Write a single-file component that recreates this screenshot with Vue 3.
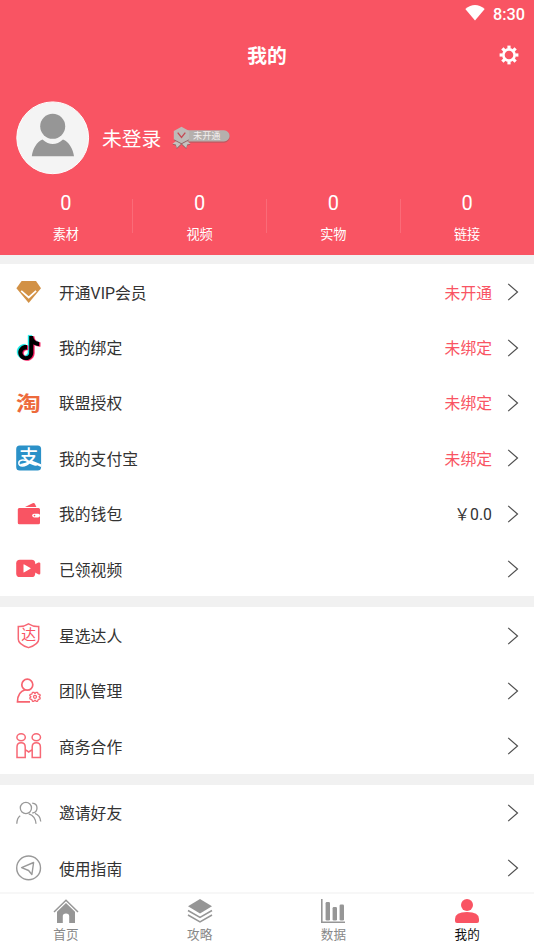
<script setup>
const stats = ['素材', '视频', '实物', '链接']
const groups = [
  [
    { icon: 'vip', label: '开通VIP会员', value: '未开通', red: true },
    { icon: 'tiktok', label: '我的绑定', value: '未绑定', red: true },
    { icon: 'taobao', label: '联盟授权', value: '未绑定', red: true },
    { icon: 'alipay', label: '我的支付宝', value: '未绑定', red: true },
    { icon: 'wallet', label: '我的钱包', value: '￥0.0' },
    { icon: 'video', label: '已领视频' },
  ],
  [
    { icon: 'shield', label: '星选达人' },
    { icon: 'team', label: '团队管理' },
    { icon: 'coop', label: '商务合作' },
  ],
  [
    { icon: 'friends', label: '邀请好友' },
    { icon: 'guide', label: '使用指南' },
  ],
]
const tabs = [
  { icon: 'home', label: '首页' },
  { icon: 'layers', label: '攻略' },
  { icon: 'chart', label: '数据' },
  { icon: 'me', label: '我的', active: true },
]
const note =
  'M12.525.02c1.31-.02 2.61-.01 3.91-.02.08 1.53.63 3.09 1.75 4.17 1.12 1.11 2.7 1.62 4.24 1.79v4.03c-1.44-.05-2.89-.35-4.2-.97-.57-.26-1.1-.59-1.62-.93-.01 2.92.01 5.84-.02 8.75-.08 1.4-.54 2.79-1.35 3.94-1.31 1.92-3.58 3.17-5.91 3.21-1.43.08-2.86-.31-4.08-1.03-2.02-1.19-3.44-3.37-3.65-5.71-.02-.5-.03-1-.01-1.49.18-1.9 1.12-3.72 2.58-4.96 1.66-1.44 3.98-2.13 6.15-1.72.02 1.48-.04 2.96-.04 4.44-.99-.32-2.15-.23-3.02.37-.63.41-1.11 1.04-1.36 1.75-.21.51-.15 1.07-.14 1.61.24 1.64 1.82 3.02 3.5 2.87 1.12-.01 2.19-.66 2.77-1.61.19-.33.4-.67.41-1.06.1-1.79.06-3.57.07-5.36.01-4.03-.01-8.05.02-12.07z'
</script>

<template>
  <div class="page">
    <header class="hero">
      <div class="status">
        <svg class="wifi" viewBox="0 0 20 16"><path d="M.3 3.9Q10-3.7 19.7 3.9L10 15.5z" fill="#fff" /></svg>
        <span class="clock">8:30</span>
      </div>
      <div class="titlebar">
        <h1>我的</h1>
        <svg class="gear" viewBox="0 0 20 20" fill="none" stroke="#fff">
          <circle cx="10" cy="10" r="5.6" stroke-width="2.6" />
          <g stroke-width="3.2">
            <path v-for="n in 8" :key="n" d="M10 .6v3.2" :transform="`rotate(${n * 45} 10 10)`" />
          </g>
        </svg>
      </div>
      <div class="profile">
        <svg class="avatar" viewBox="0 0 74 74">
          <circle cx="36.700" cy="36.800" r="35.900" fill="#f4f4f4" stroke="#fff" />
          <circle cx="36.700" cy="25.300" r="12.500" fill="#969696" />
          <path d="M15.800 55.300C16.800 47.500 20.800 41 26.500 38.500Q36.800 47.500 47 38.500C52.800 41 57 47.500 58 55.300z" fill="#969696" />
        </svg>
        <span class="name">未登录</span>
        <svg class="badge" viewBox="0 0 60 24">
          <path d="M14 5.300h38a5.700 5.700 0 0 1 0 11.400H14z" fill="#a7595d" opacity=".7" />
          <path d="M14 4.300h38a5.600 5.600 0 0 1 0 11.200H14z" fill="#b5b0ad" />
          <path d="M5.500 14L.5 17.700l3.300.8 1 3.500 4.700-4.500zM13.500 14l5 3.700-3.300.8-1 3.500-4.700-4.500z" fill="#8f5f62" transform="translate(0 .9)" />
          <path d="M5.500 14L.5 17.700l3.300.8 1 3.500 4.700-4.500zM13.500 14l5 3.700-3.300.8-1 3.500-4.700-4.500z" fill="#c5c1bf" />
          <path d="M9.500 1.500l7.400 4v8L9.500 17.500 2.100 13.500v-8z" fill="#8f5f62" transform="translate(0 .8)" />
          <path d="M9.500.8l7.700 4.100v8.300L9.500 17.300 1.800 13.200V4.900z" fill="#bdbab8" />
          <path d="M5.700 6.600l3.800 4.900 3.800-4.900" fill="none" stroke="#c44954" stroke-width="1.300" />
          <text x="21" y="13.300" font-size="9.200" fill="#f2eeee">未开通</text>
        </svg>
      </div>
      <div class="stats">
        <div v-for="s in stats" :key="s" class="stat">
          <span class="num">0</span>
          <span class="cap">{{ s }}</span>
        </div>
      </div>
    </header>

    <main class="groups">
      <section v-for="(rows, gi) in groups" :key="gi" class="group">
        <div v-for="row in rows" :key="row.label" class="row">
          <svg class="icon" viewBox="0 0 26 26">
            <template v-if="row.icon === 'vip'">
              <path d="M5.600 2h14.400l5 7.300-12.300 14.700L.4 9.300z" fill="#d29145" />
              <path d="M5.200 11.800l7.500 6.700 7.400-6.700" fill="none" stroke="#fff" stroke-width="1.700" />
            </template>
            <template v-else-if="row.icon === 'tiktok'">
              <g transform="translate(-.2 .6)">
                <path :d="note" fill="#15e8e4" stroke="#15e8e4" stroke-width=".4" transform="translate(-.3 -.3)" />
                <path :d="note" fill="#f5145a" stroke="#f5145a" stroke-width=".4" transform="translate(2 1)" />
                <path :d="note" fill="#000" transform="translate(.9 .500)" />
              </g>
            </template>
            <template v-else-if="row.icon === 'taobao'">
              <text class="tao" transform="translate(.1 20.500) scale(1.130 .92)" font-size="22">淘</text>
            </template>
            <template v-else-if="row.icon === 'alipay'">
              <rect x=".2" y=".6" width="24.900" height="25" rx="3.500" fill="#2b91c8" />
              <text class="ali" x="3.300" y="19.300" font-size="19">支</text>
              <path d="M15 15.300l10.100 4v2.800l-11.100-5z" fill="#fff" />
              <path d="M13.500 17.500C9 22.500 2.800 21.700 2.800 18s5.700-4.200 10.700-1" fill="none" stroke="#fff" stroke-width="1.500" />
            </template>
            <g v-else-if="row.icon === 'wallet'" fill="#f95463">
              <path d="M9 6l7.600-3.800q1.700-.7 2.400.7l1.400 3.100z" />
              <path d="M3.200 6.900h19.300q1.500 0 1.500 1.500v13.400q0 1.500-1.500 1.500H3.200q-1.400 0-1.400-1.500V8.400q0-1.500 1.400-1.500z" />
              <rect x="16.200" y="12.800" width="7.800" height="3.600" rx="1.800" fill="#fff" />
              <circle cx="18.500" cy="14.600" r=".8" />
            </g>
            <g v-else-if="row.icon === 'video'" fill="#f95463">
              <rect x=".2" y="3.700" width="19" height="17.300" rx="3.600" />
              <path d="M19 8.300l3.300-1.700q2-.5 2 1v9.600q0 1.700-2 1L19 16.500z" />
              <path d="M7.500 8.900v7q0 .8.800.4l6.100-3.500q.7-.4 0-.8L8.300 8.500q-.8-.4-.8.400z" fill="#fff" />
            </g>
            <g v-else-if="row.icon === 'shield'">
              <path d="M12.500.9Q17.500 3.900 22.700 3.500v12.700q0 5.200-10.200 8.400Q2.300 21.400 2.300 16.200V3.500Q7.700 3.900 12.500.9z" fill="none" stroke="#f76875" stroke-width="1.500" />
              <text x="5.200" y="17.300" font-size="14.800" fill="#f95463">达</text>
            </g>
            <g v-else-if="row.icon === 'team'" fill="none" stroke="#f76470" stroke-width="1.700">
              <circle cx="11.300" cy="6.700" r="5.500" />
              <path d="M9.200 11.800Q1.500 14 1.500 23.800H14" />
              <path d="M16.500 14.300h1.300l1.200 1.200 1.200-1.200h1.300l.8 1.900 1.600.2.300 1.200-1.100 1.200 1.100 1.200-.3 1.200-1.600.2-.8 1.900h-1.300L19 22.100l-1.200 1.200h-1.300l-.8-1.900-1.600-.2-.3-1.200 1.100-1.200-1.100-1.200.3-1.200 1.600-.2z" stroke-width="1.300" stroke-linejoin="round" />
              <circle cx="19" cy="18.800" r="1.500" stroke-width="1.300" />
            </g>
            <g v-else-if="row.icon === 'coop'" fill="none" stroke="#f76875" stroke-width="1.500">
              <ellipse cx="5.100" cy="4.300" rx="4.200" ry="3.500" />
              <ellipse cx="20.300" cy="4.300" rx="4.200" ry="3.500" />
              <path d="M9.200 17v7.600H1V14q0-4.200 4.100-4.200t4.100 4.200v2.700l3.500 2.300 3.500-2.300V14q0-4.200 4.100-4.200t4.100 4.200v10.600h-8.200V17" />
            </g>
            <g v-else-if="row.icon === 'friends'" fill="none" stroke="#999" stroke-width="1.300">
              <circle cx="9.900" cy="8" r="5.600" />
              <path d="M16.200 3.200Q21 3.600 21 8t-4.700 5M.8 23.700Q1 18 4.200 15.800M12.800 13.800Q19.500 16 20 23.700M19 13.400Q24.300 15.500 24.700 21.500" />
            </g>
            <g v-else fill="none" stroke="#999">
              <circle cx="12.600" cy="12.900" r="11.900" stroke-width="1.400" />
              <path d="M5.600 12.600L17.600 7.500l-1.700 12-3.300-4z" stroke-width="1.400" stroke-linejoin="round" />
            </g>
          </svg>
          <span class="label">{{ row.label }}</span>
          <span v-if="row.value" class="value" :class="{ red: row.red }">{{ row.value }}</span>
          <svg class="chevron" viewBox="0 0 11 18"><path d="M1.200.9L10.500 9l-9.300 8.100" fill="none" stroke="#505050" stroke-width="1.200" /></svg>
        </div>
      </section>
    </main>

    <nav class="tabbar">
      <div v-for="t in tabs" :key="t.label" class="tab" :class="{ active: t.active }">
        <svg class="tabicon" viewBox="0 0 26 26">
          <g v-if="t.icon === 'home'" fill="#969696">
            <path d="M1 14L13 2.200 25 14" fill="none" stroke="#969696" stroke-width="1.500" />
            <path d="M4 13.800L13 5l9 8.800V25h-5.800v-7q0-2.600-3.200-2.600T9.800 18v7H4z" />
          </g>
          <g v-else-if="t.icon === 'layers'">
            <path d="M13 1l12 7.300-12 7.200L1 8.300z" fill="#969696" />
            <path d="M1 12.500l12 7 12-7M1 17l12 7 12-7" fill="none" stroke="#969696" stroke-width="1.500" />
          </g>
          <g v-else-if="t.icon === 'chart'" fill="#969696">
            <path d="M1 1h1.600v22.600H25V25H1z" />
            <rect x="5.600" y="4" width="4.400" height="18.500" rx="1.300" />
            <rect x="12.600" y="9" width="4.400" height="13.500" rx="1.300" />
            <rect x="19.600" y="6.500" width="4.400" height="16" rx="1.300" />
          </g>
          <g v-else fill="#f95463">
            <circle cx="13" cy="7" r="6" />
            <path d="M1 21q0-7 12-7t12 7v2q0 2-2 2H3q-2 0-2-2z" />
          </g>
        </svg>
        <span>{{ t.label }}</span>
      </div>
    </nav>
  </div>
</template>

<style>
body {
  margin: 0;
  overflow: hidden;
}
</style>

<style scoped>
.page {
  display: flex;
  flex-direction: column;
  width: 534px;
  height: 949px;
  overflow: hidden;
  background: #fff;
  color: #333;
  font-family: Roboto, "Noto Sans CJK SC", sans-serif;
}
svg {
  display: block;
  flex: none;
  overflow: visible;
}
.hero {
  flex: none;
  display: flex;
  flex-direction: column;
  height: 255px;
  background: #f95463;
  color: #fff;
}
.status {
  display: flex;
  align-items: center;
  justify-content: flex-end;
  gap: 8px;
  height: 28px;
  padding-right: 9px;
}
.wifi {
  width: 20px;
  height: 16px;
  margin-bottom: 2px;
}
.clock {
  padding-top: 1px;
  font-size: 16.3px;
  font-weight: 500;
  line-height: 28px;
}
.titlebar {
  display: grid;
  grid-template-columns: 1fr auto 1fr;
  align-items: center;
  height: 54px;
  padding: 0 15px;
}
h1 {
  grid-column: 2;
  margin: 0;
  padding-top: 3px;
  font-size: 19.8px;
  font-weight: 700;
  line-height: 28px;
}
.gear {
  justify-self: end;
  width: 20px;
  height: 20px;
}
.profile {
  display: flex;
  align-items: center;
  height: 74px;
  margin-top: 19px;
  padding-left: 16px;
}
.avatar {
  width: 74px;
  height: 74px;
}
.name {
  margin-left: 12px;
  padding-top: 3px;
  font-size: 19.8px;
  line-height: 28px;
}
.badge {
  width: 60px;
  height: 24px;
  margin-left: 10.5px;
}
.stats {
  display: grid;
  grid-template-columns: repeat(4, 1fr);
  width: 535px;
  margin: 16px 0 0 -1px;
}
.stat {
  display: flex;
  flex-direction: column;
  align-items: center;
  position: relative;
}
.stat + .stat::before {
  content: "";
  position: absolute;
  left: -.4px;
  top: 8px;
  width: 1px;
  height: 34px;
  background: #fa6b78;
}
.num {
  font-size: 20px;
  line-height: 24px;
}
.cap {
  margin-top: 10px;
  font-size: 13.2px;
  line-height: 20px;
}
.groups {
  flex: 1;
  display: flex;
  flex-direction: column;
  gap: 11px;
  min-height: 0;
  padding-top: 9px;
  overflow: hidden;
  background: #f1f1f1;
}
.group {
  flex: none;
  background: #fff;
}
.row {
  box-sizing: border-box;
  display: flex;
  align-items: center;
  height: 55.4px;
  padding: 1px 16px 0;
}
.icon {
  width: 26px;
  height: 26px;
}
.label {
  margin-left: 17px;
  margin-right: auto;
  padding-top: 3px;
  font-size: 15.8px;
  line-height: 24px;
}
.value {
  padding-top: 3px;
  font-size: 15.8px;
  line-height: 24px;
}
.red {
  color: #f95463;
}
.chevron {
  width: 11px;
  height: 18px;
  margin-left: 15px;
}
.tao {
  fill: #ed6a3c;
  font-weight: 700;
}
.ali {
  fill: #fff;
  font-weight: 500;
}
.tabbar {
  flex: none;
  box-sizing: border-box;
  display: grid;
  grid-template-columns: repeat(4, 1fr);
  width: 535px;
  height: 57px;
  margin-left: -1px;
  border-top: 2px solid #f7f7f7;
  background: #fff;
}
.tab {
  display: flex;
  flex-direction: column;
  align-items: center;
  padding-top: 4px;
  font-size: 12.6px;
  line-height: 22px;
  color: #888;
}
.tab.active {
  color: #111;
}
.tabicon {
  width: 26px;
  height: 26px;
}
</style>
